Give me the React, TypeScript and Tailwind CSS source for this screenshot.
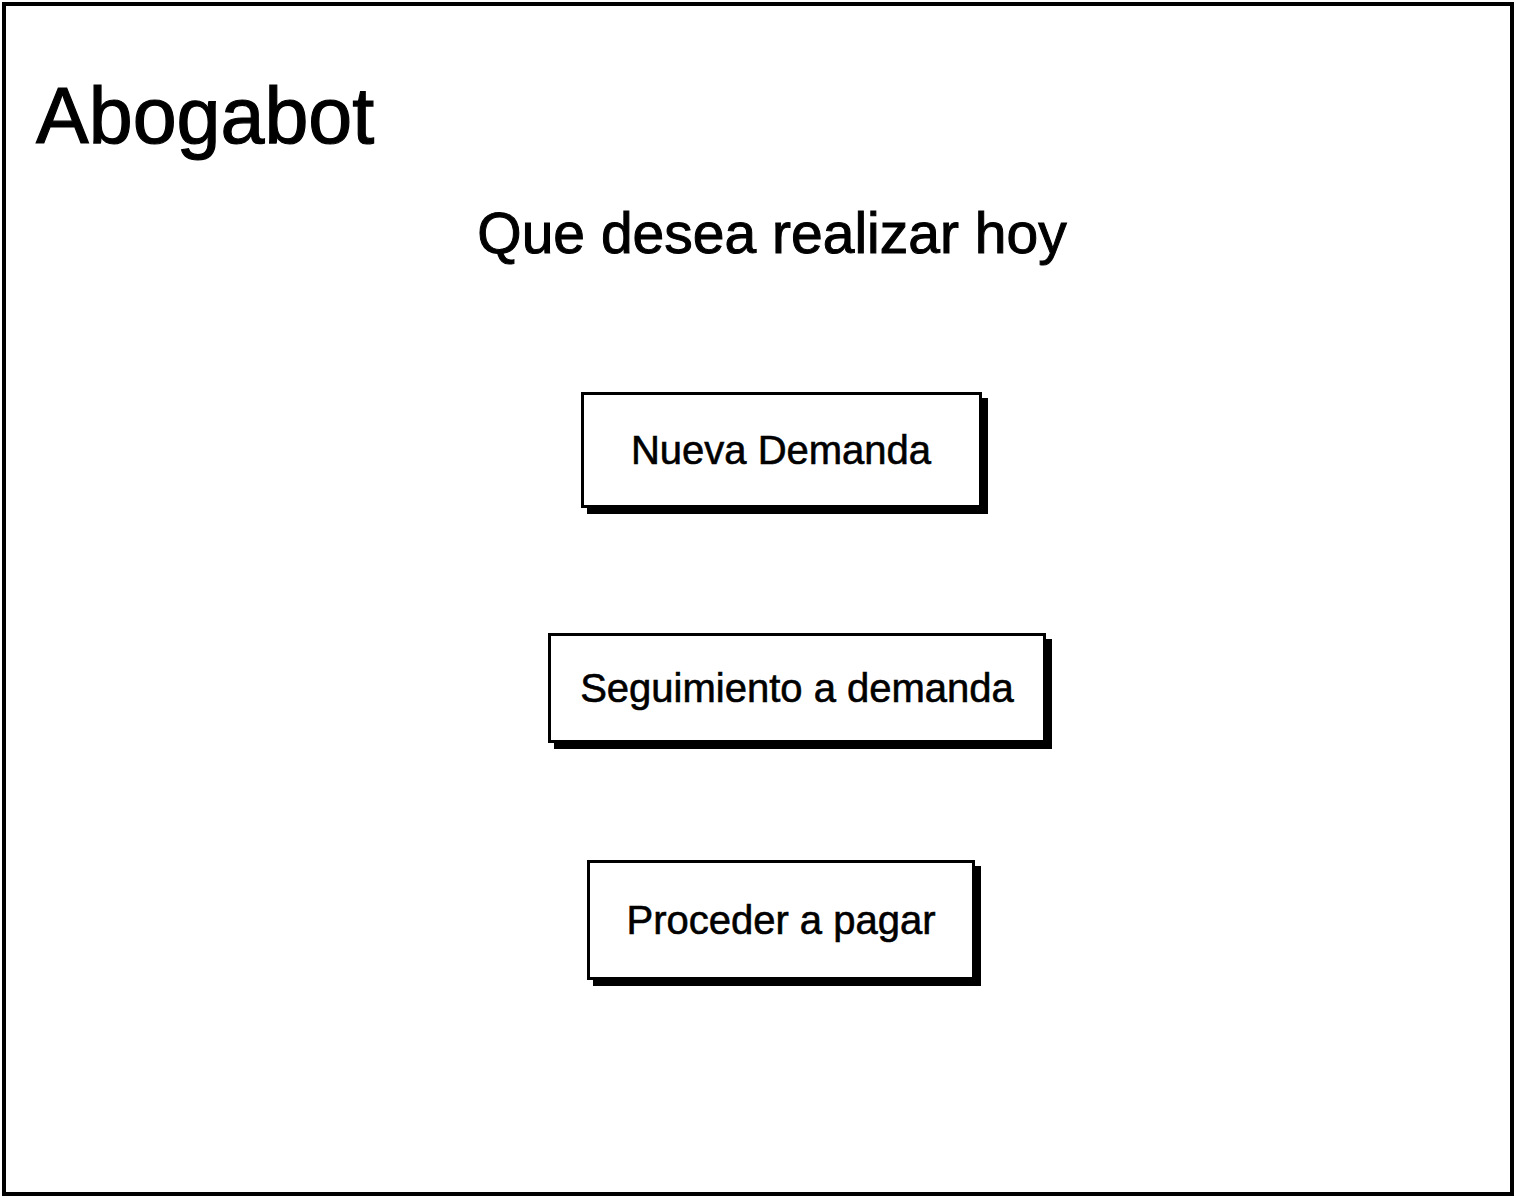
const actions = [
  { label: "Nueva Demanda", box: "w-[401px] h-[116px]", shift: "ml-0" },
  { label: "Seguimiento a demanda", box: "w-[498px] h-[110px]", shift: "ml-[32px]" },
  { label: "Proceder a pagar", box: "w-[388px] h-[120px]", shift: "ml-0" },
];

const spacing = ["mt-[130px]", "mt-[125px]", "mt-[117px]"];

export default function App() {
  return (
    <div
      className="h-[1198px] w-full bg-white p-[2px] text-black"
      style={{ fontFamily: '"Liberation Sans", Arial, sans-serif' }}
    >
      <div className="flex h-full flex-col border-[4px] border-black">
        <h1 className="pl-[30px] pt-[70px] text-[79px] leading-none font-normal [-webkit-text-stroke:1.2px_black]">
          Abogabot
        </h1>

        <div className="flex flex-col items-center pl-[46px]">
          <h2 className="mt-[50px] mr-[18px] text-[57px] leading-none font-normal [-webkit-text-stroke:1px_black]">
            Que desea realizar hoy
          </h2>

          {actions.map((item, i) => (
            <button
              key={item.label}
              className={`${spacing[i]} ${item.box} ${item.shift} flex items-center justify-center border-[3px] border-black bg-white text-[40px] leading-none shadow-[6px_6px_0_#000] [-webkit-text-stroke:0.6px_black]`}
            >
              {item.label}
            </button>
          ))}
        </div>
      </div>
    </div>
  );
}
